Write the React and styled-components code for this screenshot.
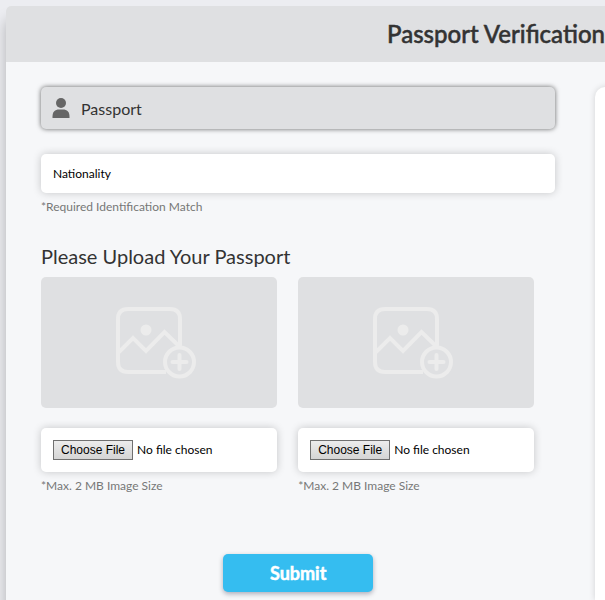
import React, {useState} from 'react'
import styled, {createGlobalStyle} from 'styled-components'

const GlobalStyle = createGlobalStyle`
  * {
    box-sizing: border-box;
  }
  body {
    margin: 0;
    overflow-x: hidden;
    background: #ecedf1;
    color: #333;
    font-family: Lato, sans-serif;
  }
`
const Page = styled.div`
  display: flex;
  min-height: 100vh;
  padding: 6px 6px 0;
`
const Card = styled.main`
  display: flex;
  flex-direction: column;
  flex: 1 0 980px;
  border-radius: 5px 5px 0 0;
  background: #f6f7f9;
  box-shadow: 0 14px 14px rgba(0, 0, 0, 0.25);
`
const Header = styled.header`
  padding: 12px;
  border-radius: 5px 5px 0 0;
  background: #dfe0e2;
  text-align: center;
`
const Title = styled.h1`
  margin: 0;
  font-size: 24px;
  line-height: 32px;
  font-weight: 500;
  -webkit-text-stroke: 0.5px #333;
`
const Columns = styled.div`
  display: grid;
  grid-template-columns: 4fr 3fr;
  gap: 40px;
  flex: 1;
  padding: 25px 5px 0 35px;
`
const Form = styled.form`
  display: flex;
  flex-direction: column;
  padding-bottom: 8px;
`
const Preview = styled.section`
  border-radius: 10px 10px 0 0;
  background: #fff;
  box-shadow: 0 0 6px rgba(0, 0, 0, 0.15);
`
const DocumentType = styled.button`
  display: flex;
  align-items: center;
  gap: 11px;
  height: 42px;
  margin-bottom: 25px;
  padding: 0 11px;
  border: 0;
  border-radius: 5px;
  background: #dfe0e2;
  box-shadow: 0 0 5px rgba(0, 0, 0, 0.6);
  color: #333;
  font-family: inherit;
  font-size: 16px;
  cursor: pointer;
`
const Field = styled.label`
  display: block;
  font-size: 12px;
  line-height: 16px;
  color: #777;
`
const Hint = styled.span`
  display: block;
  margin-top: 6px;
`
const TextInput = styled.input`
  display: block;
  width: 100%;
  height: 39px;
  padding: 0 12px;
  border: 0;
  border-radius: 5px;
  background: #fff;
  box-shadow: 0 0 8px rgba(0, 0, 0, 0.2);
  font-family: inherit;
  font-size: 12px;
  &::placeholder {
    color: #000;
    opacity: 1;
  }
`
const Subtitle = styled.h2`
  margin: 29px 0 9px;
  font-size: 20px;
  line-height: 24px;
  font-weight: 400;
`
const Uploads = styled.div`
  display: grid;
  grid-template-columns: 1fr 1fr;
  gap: 21px;
  padding-right: 21px;
`
const Placeholder = styled.div`
  display: flex;
  align-items: center;
  justify-content: center;
  height: 131px;
  margin-bottom: 20px;
  border-radius: 5px;
  background: #dfe0e2;
`
const FileInput = styled.input`
  display: block;
  width: 100%;
  height: 44px;
  padding: 12px;
  border: 0;
  border-radius: 5px;
  background: #fff;
  box-shadow: 0 0 8px rgba(0, 0, 0, 0.2);
  color: #000;
  font-family: inherit;
  font-size: 12px;
  line-height: 20px;
  &::file-selector-button {
    height: 20px;
    margin: 0 4px 0 0;
    padding: 0 7px;
    border: 1px solid #707070;
    border-radius: 0;
    background: linear-gradient(#ececec, #d5d5d5);
    color: #000;
    font-family: "Liberation Sans", Arial, sans-serif;
    font-size: 12px;
  }
`
const Submit = styled.button`
  align-self: center;
  width: 150px;
  height: 38px;
  margin-top: 60px;
  border: 0;
  border-radius: 5px;
  background: #35bdf0;
  box-shadow: 0 2px 5px rgba(0, 0, 40, 0.3);
  color: #fff;
  font-family: inherit;
  font-size: 18px;
  font-weight: 700;
  -webkit-text-stroke: 0.5px #fff;
  cursor: pointer;
`

function PersonIcon() {
  return (
    <svg width="18" height="20" viewBox="0 0 18 20" fill="#666" aria-hidden="true">
      <circle cx="9" cy="5" r="5"/>
      <path d="M0.5 20V18.5C0.5 14 3 11.5 7 11.5H11C15 11.5 17.5 14 17.5 18.5V20Z"/>
    </svg>
  )
}

function AddImageIcon() {
  return (
    <svg width="88" height="76" viewBox="0 0 88 76" fill="none" stroke="#ececec" strokeWidth="4" aria-hidden="true">
      <path d="M51 67H13Q3 67 3 57V14Q3 4 13 4H55Q65 4 65 14V41"/>
      <path d="M4 47L18 33L31 46L49.500 27L65 42"/>
      <circle cx="31" cy="25" r="5.500" fill="#ececec" stroke="none"/>
      <circle cx="64.500" cy="57" r="14.500"/>
      <path d="M64.500 50V64M57.500 57H71.500" strokeLinecap="round"/>
    </svg>
  )
}

function Upload({name}) {
  return (
    <Field>
      <Placeholder>
        <AddImageIcon/>
      </Placeholder>
      <FileInput type="file" name={name} accept="image/*"/>
      <Hint>*Max. 2 MB Image Size</Hint>
    </Field>
  )
}

function App() {
  const [nationality, setNationality] = useState('')

  return (
    <>
      <GlobalStyle/>
      <Page>
        <Card>
          <Header>
            <Title>Passport Verification</Title>
          </Header>
          <Columns>
            <Form onSubmit={(e) => e.preventDefault()}>
              <DocumentType type="button">
                <PersonIcon/>
                Passport
              </DocumentType>
              <Field>
                <TextInput
                  name="nationality"
                  placeholder="Nationality"
                  value={nationality}
                  onChange={(e) => setNationality(e.target.value)}
                />
                <Hint>*Required Identification Match</Hint>
              </Field>
              <Subtitle>Please Upload Your Passport</Subtitle>
              <Uploads>
                <Upload name="front"/>
                <Upload name="back"/>
              </Uploads>
              <Submit>Submit</Submit>
            </Form>
            <Preview/>
          </Columns>
        </Card>
      </Page>
    </>
  )
}

export default App
